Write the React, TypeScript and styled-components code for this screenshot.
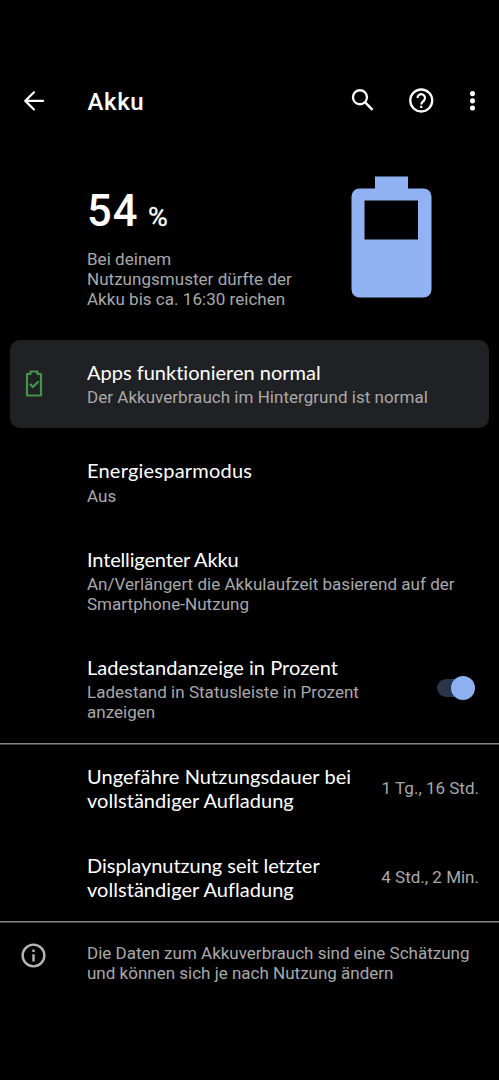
import React from 'react';
import styled, { createGlobalStyle } from 'styled-components';

const GlobalStyle = createGlobalStyle`
  * { box-sizing: border-box; }
  body { margin: 0; background: #000; }
`;

const Screen = styled.main`
  display: flex;
  flex-direction: column;
  width: 499px;
  height: 1080px;
  padding-top: 66px;
  overflow: hidden;
  background: #000;
  color: #fff;
  font-family: Roboto, sans-serif;
`;

const Toolbar = styled.header`
  display: flex;
  align-items: center;
  height: 69px;
  padding-left: 19px;
  padding-right: 12px;
`;

const IconButton = styled.button<{ $gap?: number }>`
  display: flex;
  flex: none;
  width: 29px;
  height: 29px;
  margin: 0 0 0 ${({ $gap = 0 }) => $gap}px;
  padding: 0;
  border: 0;
  background: none;
  color: #fff;
`;

const PageTitle = styled.h1`
  flex: 1;
  margin: 3px 0 0 39.5px;
  font: 500 24px/30px Roboto, sans-serif;
  letter-spacing: 0.6px;
`;

const Summary = styled.section`
  display: flex;
  justify-content: space-between;
  height: 204.5px;
  padding: 41px 67px 0 87px;
`;

const Level = styled.div`
  height: 73px;
  padding-top: 8px;
  font: 500 43.5px/56px Roboto, sans-serif;
  letter-spacing: 1px;
  white-space: pre;
`;

const Percent = styled.span`
  display: inline-block;
  margin-left: 10px;
  font-size: 25px;
  font-weight: 400;
  -webkit-text-stroke: 0.3px #fff;
  transform: scaleX(1.08);
  transform-origin: left;
`;

const Caption = styled.p<{ $top?: number }>`
  margin: ${({ $top = 0 }) => $top}px 0 0;
  color: #a9a9a9;
  font: 400 17px/20px Roboto, sans-serif;
  letter-spacing: 0.03px;
  white-space: pre-line;
`;

const FooterCaption = styled(Caption)`
  letter-spacing: 0;
`;

const Row = styled.section<{ $height: number }>`
  display: flex;
  flex: none;
  height: ${({ $height }) => $height}px;
  padding: 20px 20px 0 87px;
`;

const Card = styled(Row)`
  margin: 0 10px 10px;
  padding: 20.5px 10px 0 13px;
  border-radius: 10px;
  background: #202124;
`;

const IconColumn = styled.div`
  display: flex;
  flex: none;
  width: 64px;
`;

const Footer = styled.footer`
  display: flex;
  padding: 19px 20px 0 19px;
`;

const InfoColumn = styled(IconColumn)`
  width: 68px;
  color: #b4b4b4;
`;

const Title = styled.h2<{ $spacing?: number }>`
  margin: 0;
  color: #fff;
  font: 400 20px/24.4px Lato, sans-serif;
  font-variant-ligatures: none;
  letter-spacing: ${({ $spacing = 0 }) => $spacing}px;
  white-space: nowrap;
`;

const TitleLine = styled(Title).attrs({ as: 'span' })`
  display: block;
`;

const Copy = styled.div`
  flex: 1;
  white-space: nowrap;
`;

const Value = styled.div`
  align-self: flex-start;
  margin-top: 14px;
  color: #a9a9a9;
  font: 400 17px/20px Roboto, sans-serif;
  white-space: nowrap;
`;

const Group = styled.div`
  border-top: 1px solid #858585;
  box-shadow: inset 0 1px #444;
`;

const Toggle = styled.button`
  display: flex;
  align-items: center;
  justify-content: flex-end;
  width: 36px;
  height: 18px;
  margin: 24.5px 6px 0 0;
  padding: 0;
  border: 0;
  border-radius: 9px;
  background: #2b3549;
`;

const Thumb = styled.span`
  flex: none;
  width: 24px;
  height: 24px;
  margin-right: -2px;
  border-radius: 50%;
  background: #8fb0f0;
`;

const Icon = ({ children }: { children: React.ReactNode }) => (
  <svg width="29" height="29" viewBox="0 0 24 24" fill="none" stroke="currentColor" strokeWidth="2">
    {children}
  </svg>
);

const Battery = () => (
  <svg width="81" height="122" viewBox="0 0 81 122">
    <path
      fill="#92b3f3"
      fillRule="evenodd"
      d="M24 0.5h33v12h15.500a8 8 0 0 1 8 8v93a8 8 0 0 1-8 8h-64a8 8 0 0 1-8-8v-93a8 8 0 0 1 8-8H24zM13.500 24.500v39h53.500v-39z"
    />
  </svg>
);

const settings = [
  { title: 'Energiesparmodus', spacing: 0.22, text: 'Aus', gap: 4, height: 89 },
  {
    title: 'Intelligenter Akku',
    spacing: -0.15,
    text: 'An/Verlängert die Akkulaufzeit basierend auf der\nSmartphone-Nutzung',
    gap: 3,
    height: 108,
  },
  {
    title: 'Ladestandanzeige in Prozent',
    spacing: 0.04,
    text: 'Ladestand in Statusleiste in Prozent\nanzeigen',
    gap: 3.500,
    height: 108,
    toggle: true,
  },
];

const usage = [
  {
    lines: [
      { text: 'Ungefähre Nutzungsdauer bei', spacing: 0.08 },
      { text: 'vollständiger Aufladung', spacing: 0.04 },
    ],
    value: '1 Tg., 16 Std.',
    height: 89,
  },
  {
    lines: [
      { text: 'Displaynutzung seit letzter', spacing: -0.03 },
      { text: 'vollständiger Aufladung', spacing: 0.04 },
    ],
    value: '4 Std., 2 Min.',
    height: 88,
  },
];

export default function App() {
  return (
    <>
      <GlobalStyle />
      <Screen>
        <Toolbar>
          <IconButton aria-label="Zurück">
            <Icon>
              <path strokeWidth="1.800" strokeLinecap="round" strokeLinejoin="round" d="M20 12.300H5.200M12.400 5.200L5.200 12.300l7.200 7.100" />
            </Icon>
          </IconButton>
          <PageTitle>Akku</PageTitle>
          <IconButton aria-label="Suchen">
            <Icon>
              <circle cx="9.900" cy="9.300" r="5.800" strokeWidth="1.900" />
              <path d="M14 13.400L20.300 19.700" />
            </Icon>
          </IconButton>
          <IconButton $gap={30} aria-label="Hilfe">
            <Icon>
              <circle cx="11.800" cy="12" r="9.100" strokeWidth="1.900" />
              <path strokeWidth="1.800" d="M8.700 10a3.100 3.100 0 1 1 5.300 2.100c-1.100 1.100-2.200 1.500-2.200 3.300M11.800 16.400v1.900" />
            </Icon>
          </IconButton>
          <IconButton $gap={22} aria-label="Weitere Optionen">
            <Icon>
              <g fill="currentColor" stroke="none">
                <circle cx="12" cy="6.300" r="2.100" />
                <circle cx="12" cy="12.300" r="2.100" />
                <circle cx="12" cy="18.200" r="2.100" />
              </g>
            </Icon>
          </IconButton>
        </Toolbar>

        <Summary>
          <div>
            <Level>
              54<Percent>%</Percent>
            </Level>
            <Caption>{'Bei deinem\nNutzungsmuster dürfte der\nAkku bis ca. 16:30 reichen'}</Caption>
          </div>
          <Battery />
        </Summary>

        <Card $height={88}>
          <IconColumn>
            <svg width="22" height="50" viewBox="0 0 22 50" fill="none" stroke="#43944a" strokeWidth="2.200">
              <path strokeLinejoin="round" d="M4 14h3.500v-2.500h7V14H18v21.500H4z" />
              <path d="M6.800 23.800l3.100 3.200 5.800-5.800" />
            </svg>
          </IconColumn>
          <Copy>
            <Title>Apps funktionieren normal</Title>
            <Caption $top={3}>Der Akkuverbrauch im Hintergrund ist normal</Caption>
          </Copy>
        </Card>

        {settings.map((item) => (
          <Row key={item.title} $height={item.height}>
            <Copy>
              <Title $spacing={item.spacing}>{item.title}</Title>
              <Caption $top={item.gap}>{item.text}</Caption>
            </Copy>
            {item.toggle && (
              <Toggle role="switch" aria-checked="true" aria-label={item.title}>
                <Thumb />
              </Toggle>
            )}
          </Row>
        ))}

        <Group>
          {usage.map((item) => (
            <Row key={item.value} $height={item.height}>
              <Copy>
                {item.lines.map((line) => (
                  <TitleLine key={line.text} $spacing={line.spacing}>
                    {line.text}
                  </TitleLine>
                ))}
              </Copy>
              <Value>{item.value}</Value>
            </Row>
          ))}
        </Group>

        <Group>
          <Footer>
            <InfoColumn>
              <Icon>
                <circle cx="12" cy="12" r="9" />
                <path d="M12 11v6M12 7v2" />
              </Icon>
            </InfoColumn>
            <FooterCaption $top={2}>
              {'Die Daten zum Akkuverbrauch sind eine Schätzung\nund können sich je nach Nutzung ändern'}
            </FooterCaption>
          </Footer>
        </Group>
      </Screen>
    </>
  );
}
